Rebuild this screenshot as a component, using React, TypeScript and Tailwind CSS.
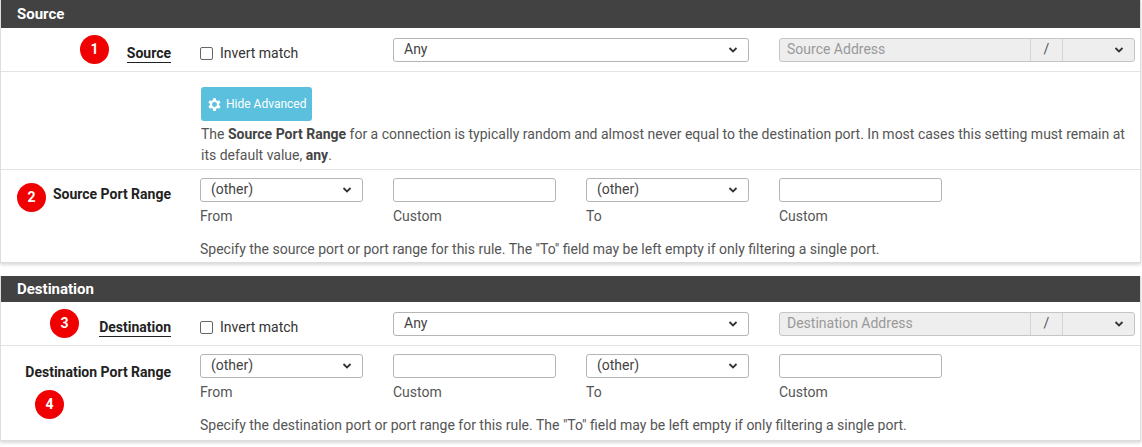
import React from "react";

const Chev = () => (
  <svg width="10" height="8" viewBox="0 0 10 8" className="absolute right-[10px] top-1/2 -translate-y-1/2">
    <path d="M1.5 2 L5 5.5 L8.5 2" stroke="#333" strokeWidth="1.8" fill="none" />
  </svg>
);

const Select = ({ text, w }: { text: string; w: string }) => (
  <div className={`relative h-[24px] ${w} border border-[#b5b5b5] rounded-[3px] bg-white text-[14px] text-[#444] pl-[10px] leading-[20px]`}>
    {text}
    <Chev />
  </div>
);

const Input = () => <div className="h-[24px] w-[163px] border border-[#b5b5b5] rounded-[3px] bg-white" />;

const Badge = ({ n, cls }: { n: number; cls: string }) => (
  <div className={`absolute ${cls} w-[29px] h-[29px] rounded-full bg-[#f00000] text-white text-[14px] font-bold flex items-center justify-center`}>{n}</div>
);

const Label = ({ children, u }: { children: React.ReactNode; u?: boolean }) => (
  <div className="w-[170px] shrink-0 text-right text-[14px] font-bold text-[#222]">
    <span className={u ? "border-b border-[#222] pb-[1px]" : ""}>{children}</span>
  </div>
);

const Address = ({ ph }: { ph: string }) => (
  <div className="flex h-[24px] w-[356px] border border-[#c5c5c5] rounded-[3px] bg-[#eeeeee] text-[14px] text-[#999]">
    <div className="flex-1 pl-[7px] leading-[20px]">{ph}</div>
    <div className="w-[32px] border-l border-[#d5d5d5] text-center leading-[20px] text-[#555]">/</div>
    <div className="relative w-[72px] border-l border-[#d5d5d5]"><Chev /></div>
  </div>
);

const PortRow = ({ help }: { help: string }) => (
  <div className="pl-[29px] flex-1">
    <div className="flex gap-[30px]">
      <Select text="(other)" w="w-[163px]" />
      <Input />
      <Select text="(other)" w="w-[163px]" />
      <Input />
    </div>
    <div className="flex gap-[30px] text-[14px] text-[#555] mt-[4px]">
      <div className="w-[163px]">From</div>
      <div className="w-[163px]">Custom</div>
      <div className="w-[163px]">To</div>
      <div className="w-[163px]">Custom</div>
    </div>
    <div className="text-[14px] text-[#555] mt-[12px]">{help}</div>
  </div>
);

const Invert = () => (
  <div className="flex items-center w-[193px] pt-[8px]">
    <div className="w-[13px] h-[13px] border border-[#666] rounded-[2px] mr-[7px]" />
    <span className="text-[14px] text-[#333]">Invert match</span>
  </div>
);

export default function App() {
  return (
    <div className="w-[1142px] h-[447px] bg-white" style={{ fontFamily: "Roboto, 'Liberation Sans', sans-serif" }}>
      <div className="w-[1141px] border border-[#ddd] border-t-0 shadow-[0_2px_3px_rgba(0,0,0,0.15)] relative">
        <div className="h-[28px] bg-[#424242] text-white font-bold text-[15px] pl-[16px] leading-[28px]">Source</div>
        <div className="h-[44px] flex items-center border-b border-[#e3e3e3]">
          <div className="pt-[8px]"><Label u>Source</Label></div>
          <div className="pl-[29px] flex items-center">
            <Invert />
            <Select text="Any" w="w-[356px]" />
            <div className="w-[30px]" />
            <Address ph="Source Address" />
          </div>
        </div>
        <div className="h-[98px] border-b border-[#e3e3e3] pl-[200px] pt-[15px]">
          <div className="w-[111px] h-[34px] bg-[#5bc0de] rounded-[3px] flex items-center pl-[5px] text-white text-[12px]">
            <svg width="17" height="17" viewBox="0 0 24 24" fill="white" className="mr-[3px]"><path d="M19.4 13a7.5 7.5 0 0 0 0-2l2.1-1.6-2-3.5-2.5 1a7 7 0 0 0-1.7-1L15 3h-4l-.4 2.9a7 7 0 0 0-1.7 1l-2.5-1-2 3.5L6.6 11a7.5 7.5 0 0 0 0 2l-2.1 1.6 2 3.5 2.5-1a7 7 0 0 0 1.7 1L11 21h4l.4-2.9a7 7 0 0 0 1.7-1l2.5 1 2-3.5zM13 15.5a3.5 3.5 0 1 1 0-7 3.5 3.5 0 0 1 0 7z" transform="translate(-1 0)"/></svg>
            Hide Advanced
          </div>
          <div className="text-[14px] text-[#555] mt-[3px] leading-[21px] pr-[10px]">
            The <b className="text-[#444]">Source Port Range</b> for a connection is typically random and almost never equal to the destination port. In most cases this setting must remain at its default value, <b className="text-[#444]">any</b>.
          </div>
        </div>
        <div className="h-[92px] flex pt-[8px]">
          <div className="pt-[6px]"><Label>Source Port Range</Label></div>
          <PortRow help='Specify the source port or port range for this rule. The "To" field may be left empty if only filtering a single port.' />
        </div>
        <Badge n={1} cls="left-[79px] top-[35px]" />
        <Badge n={2} cls="left-[16px] top-[183px]" />
      </div>
      <div className="h-[13px]" />
      <div className="w-[1141px] border border-[#ddd] border-t-0 shadow-[0_2px_3px_rgba(0,0,0,0.15)] relative">
        <div className="h-[26px] bg-[#424242] text-white font-bold text-[15px] pl-[16px] leading-[26px]">Destination</div>
        <div className="h-[44px] flex items-center border-b border-[#e3e3e3]">
          <div className="pt-[8px]"><Label u>Destination</Label></div>
          <div className="pl-[29px] flex items-center">
            <Invert />
            <Select text="Any" w="w-[356px]" />
            <div className="w-[30px]" />
            <Address ph="Destination Address" />
          </div>
        </div>
        <div className="h-[94px] flex pt-[8px]">
          <div className="pt-[8px]"><Label>Destination Port Range</Label></div>
          <PortRow help='Specify the destination port or port range for this rule. The "To" field may be left empty if only filtering a single port.' />
        </div>
        <Badge n={3} cls="left-[49px] top-[33px]" />
        <Badge n={4} cls="left-[34px] top-[114px]" />
      </div>
    </div>
  );
}
